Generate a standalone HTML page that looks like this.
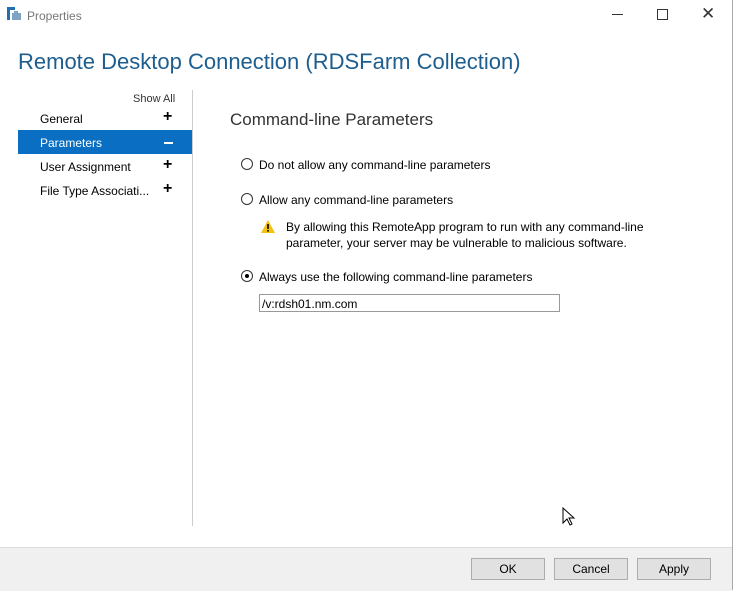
<!DOCTYPE html><html><head><style>
body{margin:0;width:733px;height:590px;background:#fff;font-family:"Liberation Sans",sans-serif;position:relative;overflow:hidden;color:#000}
.a{position:absolute;white-space:nowrap}
.t{font-size:12px}
.btn{position:absolute;top:558px;width:72px;height:20px;border:1px solid #adadad;background:#e1e1e1;font-size:12px;text-align:center;line-height:21px}
.rad{position:absolute;width:10px;height:10px;border:1px solid #333;border-radius:50%;background:#fff}
.p{position:absolute;left:163px;font-size:16px;font-weight:bold}
</style></head><body>
<div class="a" style="right:0;top:0;width:1px;height:590px;background:#aaa"></div>
<svg class="a" style="left:6px;top:7px" width="16" height="15"><rect x="1" y="0" width="3" height="13" fill="#1f6fb2"/><rect x="1" y="0" width="8" height="3" fill="#1f6fb2"/><rect x="6" y="6" width="9" height="7" fill="#7fa3c3"/><rect x="8" y="4" width="4" height="2" fill="#7fa3c3"/></svg>
<div class="a t" style="left:27px;top:9px;color:#777">Properties</div>
<div class="a" style="left:612px;top:14px;width:11px;height:1px;background:#333"></div>
<div class="a" style="left:657px;top:9px;width:9px;height:9px;border:1px solid #333"></div>
<div class="a" style="left:701px;top:4px;font-size:17px;color:#333">✕</div>
<div class="a" style="left:18px;top:49px;font-size:22px;color:#1e5e8f">Remote Desktop Connection (RDSFarm Collection)</div>
<div class="a" style="left:133px;top:93px;font-size:11px;color:#333">Show All</div>
<div class="a" style="left:192px;top:90px;width:1px;height:436px;background:#ccc"></div>
<div class="a t" style="left:40px;top:112px">General</div><div class="p" style="top:108px">+</div>
<div class="a" style="left:18px;top:130px;width:174px;height:24px;background:#0a6fc2"></div>
<div class="a t" style="left:40px;top:136px;color:#fff">Parameters</div><div class="a" style="left:164px;top:142px;width:9px;height:2px;background:#fff"></div>
<div class="a t" style="left:40px;top:160px">User Assignment</div><div class="p" style="top:156px">+</div>
<div class="a t" style="left:40px;top:184px">File Type Associati...</div><div class="p" style="top:180px">+</div>
<div class="a" style="left:230px;top:110px;font-size:17px;color:#333">Command-line Parameters</div>
<div class="rad" style="left:241px;top:158px"></div><div class="a t" style="left:259px;top:158px">Do not allow any command-line parameters</div>
<div class="rad" style="left:241px;top:193px"></div><div class="a t" style="left:259px;top:193px">Allow any command-line parameters</div>
<svg class="a" style="left:261px;top:220px" width="14" height="13"><path d="M7 0L14 13H0Z" fill="#f4c20d"/><rect x="6.2" y="4" width="1.6" height="5" fill="#000"/><rect x="6.2" y="10" width="1.6" height="1.6" fill="#000"/></svg>
<div class="a t" style="left:286px;top:219px;line-height:16px">By allowing this RemoteApp program to run with any command-line<br>parameter, your server may be vulnerable to malicious software.</div>
<div class="rad" style="left:241px;top:270px"></div><div class="a" style="left:245px;top:274px;width:4px;height:4px;border-radius:50%;background:#000"></div>
<div class="a t" style="left:259px;top:270px">Always use the following command-line parameters</div>
<div class="a" style="left:259px;top:294px;width:299px;height:16px;border:1px solid #999"></div>
<div class="a t" style="left:262px;top:297px">/v:rdsh01.nm.com</div>
<svg class="a" style="left:562px;top:507px" width="14" height="20"><path d="M1 1V16L5 12L8 18L10 17L7 11H12Z" fill="#fff" stroke="#000" stroke-width="1"/></svg>
<div class="a" style="left:0;top:547px;width:732px;height:43px;background:#f0f0f0;border-top:1px solid #dcdcdc"></div>
<div class="btn" style="left:471px">OK</div>
<div class="btn" style="left:554px">Cancel</div>
<div class="btn" style="left:637px">Apply</div>
</body></html>
